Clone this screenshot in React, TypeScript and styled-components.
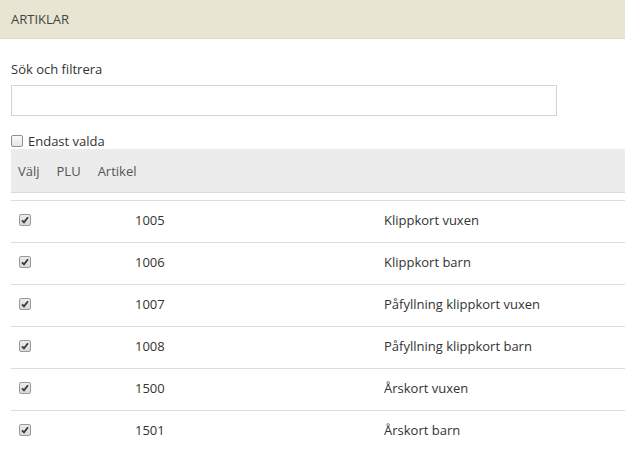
import React from "react";
import styled, { createGlobalStyle } from "styled-components";

const GlobalStyle = createGlobalStyle`
  html, body {
    margin: 0;
    padding: 0;
    background: #fff;
    font-family: "Open Sans", "Segoe UI", Arial, sans-serif;
    font-size: 13px;
    color: #333;
  }
`;

// -------------------- PANEL -------------------- //

const Panel = styled.div`
  width: 625px;
  overflow: hidden;
`;

const PanelHeader = styled.div`
  height: 38px;
  background: #e8e5d2;
  border-bottom: 1px solid #dcdacb;
  display: flex;
  align-items: center;
  padding-left: 11px;
  font-size: 13px;
  color: #444;
`;

const PanelBody = styled.div`
  padding: 21px 0 0 11px;
`;

// -------------------- FILTER -------------------- //

const Label = styled.div`
  line-height: 18px;
  margin-bottom: 7px;
`;

const SearchInput = styled.input`
  display: block;
  box-sizing: border-box;
  width: 546px;
  height: 31px;
  border: 1px solid #d4d4d4;
  border-radius: 0;
  outline: none;
  padding: 4px 8px;
  font: inherit;
`;

const CheckRow = styled.label`
  display: flex;
  align-items: center;
  gap: 5px;
  margin-top: 17px;
  height: 16px;
`;

const Box = styled.span<{ checked?: boolean }>`
  box-sizing: border-box;
  width: 12px;
  height: 12px;
  border: 1px solid ${({ checked }) => (checked ? "#9a9a9a" : "#8f8f8f")};
  border-radius: 2px;
  background: ${({ checked }) =>
    checked ? "linear-gradient(#ececec, #d9d9d9)" : "linear-gradient(#fafafa, #e6e6e6)"};
  display: inline-flex;
  align-items: center;
  justify-content: center;
  flex-shrink: 0;

  svg {
    display: block;
  }
`;

const Check: React.FC<{ checked?: boolean }> = ({ checked }) => (
  <Box checked={checked}>
    {checked && (
      <svg width="8" height="8" viewBox="0 0 8 8">
        <path d="M1 4.3 L3 6.4 L7 1.3" fill="none" stroke="#3a3a3a" strokeWidth="1.8" />
      </svg>
    )}
  </Box>
);

// -------------------- TABLE -------------------- //

const HeadRow = styled.div`
  display: flex;
  align-items: center;
  gap: 17px;
  height: 43px;
  padding-left: 7px;
  background: #ececec;
  border-bottom: 1px solid #dadada;
  color: #555;
`;

const Rows = styled.div`
  margin-top: 7px;
`;

const Row = styled.div`
  display: grid;
  grid-template-columns: 116px 249px 1fr;
  align-items: center;
  height: 42px;
  padding-bottom: 3px;
  border-top: 1px solid #dedede;
  box-sizing: border-box;
`;

const Cell = styled.div`
  padding: 0 8px;
  display: flex;
  align-items: center;
`;

const articles = [
  { plu: "1005", name: "Klippkort vuxen" },
  { plu: "1006", name: "Klippkort barn" },
  { plu: "1007", name: "Påfyllning klippkort vuxen" },
  { plu: "1008", name: "Påfyllning klippkort barn" },
  { plu: "1500", name: "Årskort vuxen" },
  { plu: "1501", name: "Årskort barn" },
];

const App: React.FC = () => (
  <Panel>
    <GlobalStyle />
    <PanelHeader>ARTIKLAR</PanelHeader>
    <PanelBody>
      <Label>Sök och filtrera</Label>
      <SearchInput type="text" />
      <CheckRow>
        <Check />
        Endast valda
      </CheckRow>
      <HeadRow>
        <span>Välj</span>
        <span>PLU</span>
        <span>Artikel</span>
      </HeadRow>
      <Rows>
        {articles.map((a) => (
          <Row key={a.plu}>
            <Cell>
              <Check checked />
            </Cell>
            <Cell>{a.plu}</Cell>
            <Cell>{a.name}</Cell>
          </Row>
        ))}
      </Rows>
    </PanelBody>
  </Panel>
);

export default App;
